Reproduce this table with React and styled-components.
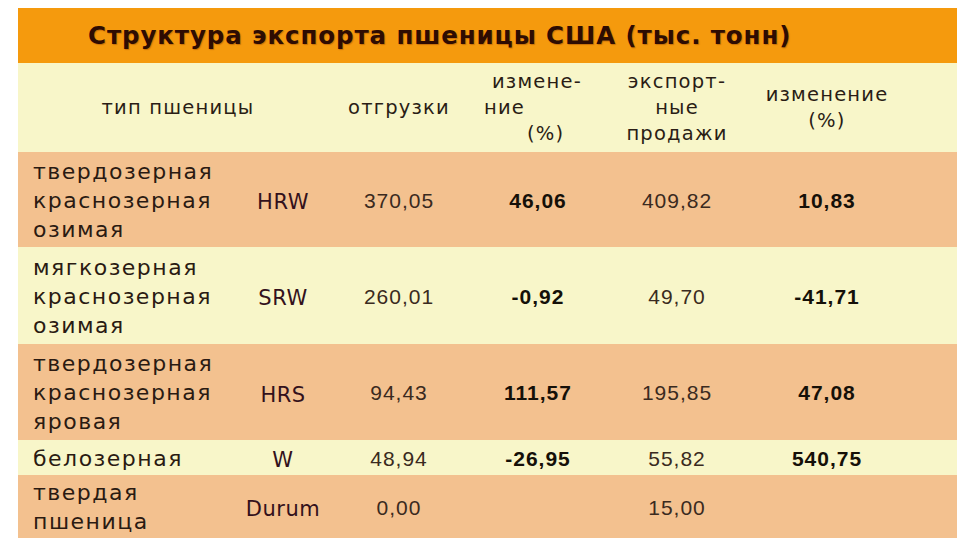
import React from 'react';
import styled, { createGlobalStyle } from 'styled-components';

const GlobalStyle = createGlobalStyle`
  body {
    margin: 0;
    background: #ffffff;
  }
`;

const Page = styled.div`
  width: 970px;
  height: 550px;
  padding: 8px 13px 0 18px;
  box-sizing: border-box;
`;

const Table = styled.div`
  width: 939px;
  display: flex;
  flex-direction: column;
`;

const TitleBar = styled.div`
  height: 55px;
  background: #f59a0d;
  display: flex;
  align-items: center;
  padding-left: 70px;
  font-family: 'DejaVu Sans', sans-serif;
  font-weight: bold;
  font-size: 24.5px;
  letter-spacing: 0.9px;
  color: #2e0c02;
  text-shadow: 1px 1px 1px rgba(120, 40, 0, 0.35);
`;

const Grid = styled.div`
  display: grid;
  grid-template-columns: 222px 86px 146px 132px 146px 154px 53px;
`;

const HeadRow = styled.div`
  display: contents;
`;

const HeadCell = styled.div`
  grid-column: ${(p) => p.$span || 'auto'};
  background: #f8f6c9;
  height: 89px;
  display: flex;
  flex-direction: column;
  justify-content: center;
  align-items: ${(p) => p.$align || 'center'};
  padding-left: ${(p) => p.$indent || 0}px;
  font-family: 'DejaVu Sans', sans-serif;
  font-size: 19.5px;
  letter-spacing: 1.2px;
  line-height: 26px;
  color: #2a1d15;
  text-align: center;
`;

const HeadLine = styled.span`
  padding-left: ${(p) => p.$shift || 0}px;
`;

const Cell = styled.div`
  background: ${(p) => (p.$tone === 'salmon' ? '#f3c18f' : '#f8f6c9')};
  display: flex;
  align-items: center;
  justify-content: center;
  padding: 3px 0 2px;
  min-height: ${(p) => p.$h}px;
  box-sizing: border-box;
  font-family: 'Liberation Sans', Arial, sans-serif;
  font-size: 21px;
  letter-spacing: 1px;
  line-height: 29px;
  font-weight: ${(p) => (p.$bold ? 'bold' : 'normal')};
  color: ${(p) => (p.$bold ? '#151008' : '#3a2a20')};
`;

const NameCell = styled(Cell)`
  justify-content: flex-start;
  padding-left: 15px;
  font-family: 'DejaVu Sans', sans-serif;
  font-size: 22px;
  letter-spacing: 1.5px;
  color: #2a1a12;
`;

const CodeCell = styled(Cell)`
  padding: 6px 0 0;
  font-family: 'DejaVu Sans', sans-serif;
  font-size: 21px;
  letter-spacing: 0.5px;
  color: #33111c;
`;

const rows = [
  { name: ['твердозерная', 'краснозерная', 'озимая'], code: 'HRW', ship: '370,05', ch1: '46,06', sales: '409,82', ch2: '10,83', tone: 'salmon', h: 95 },
  { name: ['мягкозерная', 'краснозерная', 'озимая'], code: 'SRW', ship: '260,01', ch1: '-0,92', sales: '49,70', ch2: '-41,71', tone: 'cream', h: 97 },
  { name: ['твердозерная', 'краснозерная', 'яровая'], code: 'HRS', ship: '94,43', ch1: '111,57', sales: '195,85', ch2: '47,08', tone: 'salmon', h: 96 },
  { name: ['белозерная'], code: 'W', ship: '48,94', ch1: '-26,95', sales: '55,82', ch2: '540,75', tone: 'cream', h: 34 },
  { name: ['твердая', 'пшеница'], code: 'Durum', ship: '0,00', ch1: '', sales: '15,00', ch2: '', tone: 'salmon', h: 63 },
];

export default function App() {
  return (
    <>
      <GlobalStyle />
      <Page>
        <Table>
          <TitleBar>Структура экспорта пшеницы США (тыс. тонн)</TitleBar>
          <Grid>
            <HeadRow>
              <HeadCell $span="span 2" $indent={12}>тип пшеницы</HeadCell>
              <HeadCell>отгрузки</HeadCell>
              <HeadCell $align="flex-start" $indent={12}>
                <HeadLine $shift={8}>измене-</HeadLine>
                <HeadLine>ние</HeadLine>
                <HeadLine $shift={43}>(%)</HeadLine>
              </HeadCell>
              <HeadCell>
                <span>экспорт-</span>
                <span>ные</span>
                <span>продажи</span>
              </HeadCell>
              <HeadCell>
                <span>изменение</span>
                <span>(%)</span>
              </HeadCell>
              <HeadCell />
            </HeadRow>
            {rows.map((r) => (
              <React.Fragment key={r.code}>
                <NameCell $tone={r.tone} $h={r.h}>
                  <div>
                    {r.name.map((l) => (
                      <div key={l}>{l}</div>
                    ))}
                  </div>
                </NameCell>
                <CodeCell $tone={r.tone} $h={r.h}>{r.code}</CodeCell>
                <Cell $tone={r.tone} $h={r.h}>{r.ship}</Cell>
                <Cell $tone={r.tone} $h={r.h} $bold>{r.ch1}</Cell>
                <Cell $tone={r.tone} $h={r.h}>{r.sales}</Cell>
                <Cell $tone={r.tone} $h={r.h} $bold>{r.ch2}</Cell>
                <Cell $tone={r.tone} $h={r.h} />
              </React.Fragment>
            ))}
          </Grid>
        </Table>
      </Page>
    </>
  );
}
